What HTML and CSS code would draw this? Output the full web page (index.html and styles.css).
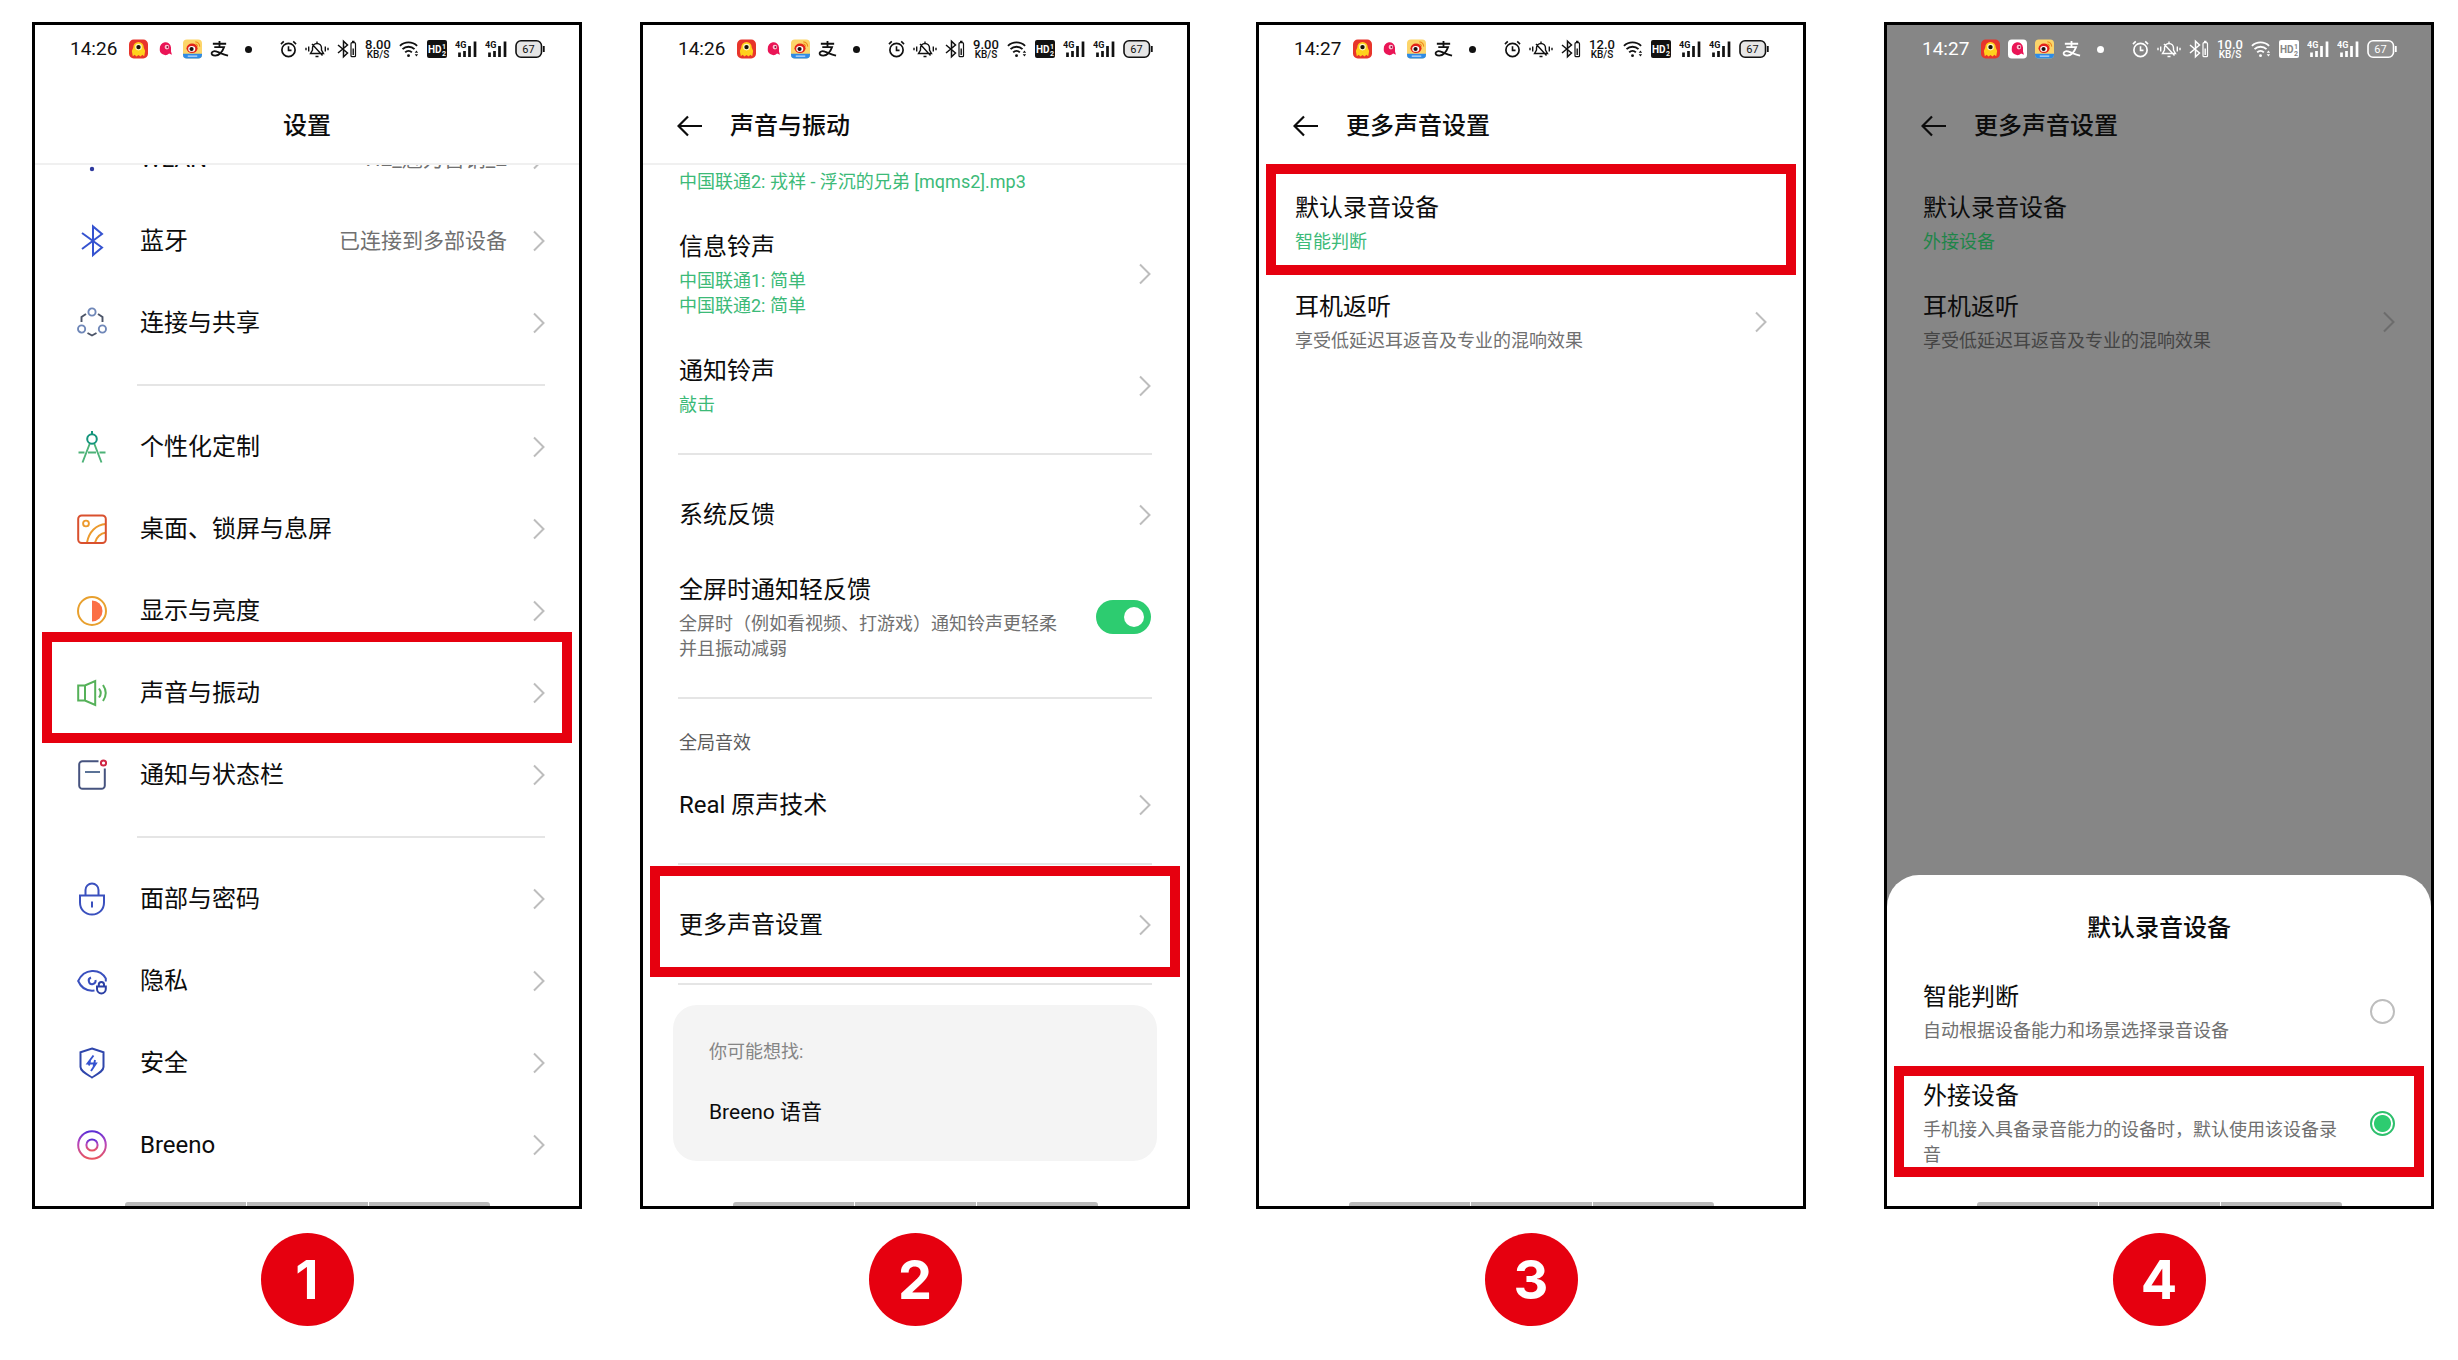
FILE: index.html
```
<!DOCTYPE html>
<html lang="zh-CN">
<head>
    <meta charset="UTF-8">
    <meta name="viewport" content="width=device-width, initial-scale=1.0">
    <title>默认录音设备设置步骤</title>
    <link rel="stylesheet" href="styles.css">
</head>
<body>
    <!-- Shared icons -->
    <svg class="sprite" aria-hidden="true">
        <symbol id="i-chevron" viewBox="0 0 12 22"><path d="M1 1.500L10.500 11L1 20.500" fill="none" stroke="currentColor" stroke-width="2"/></symbol>
        <symbol id="i-back" viewBox="0 0 26 22"><path d="M11 1.500L1.500 11L11 20.500M1.500 11H25" fill="none" stroke="currentColor" stroke-width="2.200"/></symbol>
        <symbol id="i-monster" viewBox="0 0 20 20">
            <rect x="0" y="0" width="20" height="20" rx="5" fill="#e8352b"/>
            <path d="M4.500 8.500a5.500 6 0 0 1 11 0L17 12l-1 5.500-2-1.500-1.800 2-2.200-1.800L7.800 18 6 16l-2 1.500L3 12z" fill="#ffd21c"/>
            <circle cx="10" cy="8" r="3.500" fill="#fff7c8"/><circle cx="10" cy="8" r="2.300" fill="#1a1208"/>
        </symbol>
        <symbol id="i-fish" viewBox="0 0 20 20">
            <rect class="plate" width="20" height="20" rx="4"/>
            <path d="M4 9.500a5.800 5.800 0 0 1 11.800-1.200v4.200l1 3.500-3-1.200A5.900 5.900 0 0 1 4 9.500z" fill="#ea1556"/>
            <circle cx="11.500" cy="8" r="2.400" fill="#ffc4d2"/><circle cx="12" cy="8" r="1.100" fill="#8b1640"/>
        </symbol>
        <symbol id="i-weibo" viewBox="0 0 20 20">
            <rect width="20" height="20" rx="4" fill="#fcd56a"/>
            <path d="M0 15h20v1a4 4 0 0 1-4 4H4a4 4 0 0 1-4-4z" fill="#2f8be6"/>
            <path d="M5 17.500h10" stroke="#cfe6ff" stroke-width="1.200"/>
            <ellipse cx="9.500" cy="9.300" rx="5.800" ry="5" fill="#e2231a"/>
            <ellipse cx="9.200" cy="9.900" rx="3.700" ry="3" fill="#fff"/>
            <circle cx="9" cy="10" r="2.200" fill="#1c1210"/>
            <path d="M13 2.500a4.500 4.500 0 0 1 4.500 5M13 4.800a2.300 2.300 0 0 1 2.200 2.500" fill="none" stroke="#f08a1c" stroke-width="1.200"/>
        </symbol>
        <symbol id="i-alipay" viewBox="0 0 20 20">
            <path d="M3 4.500h14M10 1.500V8M4.500 8h10.300c-1.500 4.200-5 8.800-9.300 9-3 0-4.200-1.500-3.700-3 .6-1.700 3-2.200 5.500-1.200 3.500 1.300 7 3 11.700 4.200" fill="none" stroke="currentColor" stroke-width="1.900"/>
        </symbol>
        <symbol id="i-alarm" viewBox="0 0 18 20">
            <circle cx="9" cy="11" r="7" fill="none" stroke="currentColor" stroke-width="1.800"/>
            <path d="M9 7v4.500h3.200M1 4.800L4 2M17 4.800L14 2" fill="none" stroke="currentColor" stroke-width="1.700"/>
        </symbol>
        <symbol id="i-mute" viewBox="0 0 24 20">
            <path d="M5.500 14.500h13L16.500 11V9a4.500 4.500 0 0 0-9 0v2zM12 4.500V2.500M10.500 17.500h3M7 5l10.500 11.500" fill="none" stroke="currentColor" stroke-width="1.400"/>
            <path d="M3.700 7.500v5M1 8.700v2.600M20.300 7.500v5M23 8.700v2.600" stroke="currentColor" stroke-width="1.400"/>
        </symbol>
        <symbol id="i-btbat" viewBox="0 0 20 20">
            <path d="M1 6l9.500 8-4 3.800V2.200l4 3.800L1 14" fill="none" stroke="currentColor" stroke-width="1.500"/>
            <rect x="14" y="3.700" width="4.500" height="14" rx="1" fill="none" stroke="currentColor" stroke-width="1.200"/>
            <path d="M15 2.400h2.500M16.200 9.500v6.500" stroke="currentColor" stroke-width="1.400"/>
        </symbol>
        <symbol id="i-wifi" viewBox="0 0 21 20">
            <path d="M1 6.700a13 13 0 0 1 18 0M3.700 10.200a9 9 0 0 1 12.600 0M6.500 13.500a5 5 0 0 1 7 0" fill="none" stroke="currentColor" stroke-width="2"/>
            <circle cx="10" cy="17" r="1.500" fill="currentColor"/>
            <path d="M16.500 14l1.800-2.300 1.800 2.300zM16.500 15.500l1.800 2.300 1.800-2.300z" fill="currentColor"/>
        </symbol>
        <symbol id="i-hd" viewBox="0 0 20 18">
            <rect width="20" height="18" rx="2" fill="currentColor"/>
            <text class="knock" x="1" y="13" font-size="10">HD</text>
            <text class="knock" x="15" y="8.500" font-size="7">1</text>
            <text class="knock" x="15" y="15.500" font-size="7">2</text>
        </symbol>
        <symbol id="i-signal" viewBox="0 0 22 20">
            <text x="0" y="8.500" font-size="9" font-weight="700" fill="currentColor">4G</text>
            <path d="M4.500 13.500V18M9.500 12V18M14.500 7V18M20 2.500V18" stroke="currentColor" stroke-width="2.700"/>
        </symbol>
        <symbol id="i-battery" viewBox="0 0 30 20">
            <rect class="cell" x="1" y="1.800" width="25.500" height="16.400" rx="5" stroke="currentColor" stroke-width="1.600"/>
            <path d="M28.800 7v6" stroke="currentColor" stroke-width="1.800"/>
            <text x="13.500" y="14" font-size="11" text-anchor="middle" fill="currentColor">67</text>
        </symbol>
    </svg>

    <main class="steps">
        <!-- Step 1 -->
        <section class="step">
            <div class="phone">
                <div class="status">
                    <div class="status-left">
                        <time>14:26</time>
                        <svg class="app"><use href="#i-monster"/></svg>
                        <svg class="app"><use href="#i-fish"/></svg>
                        <svg class="app"><use href="#i-weibo"/></svg>
                        <svg class="app"><use href="#i-alipay"/></svg>
                        <span class="dot"></span>
                    </div>
                    <div class="status-right">
                        <svg class="s-alarm"><use href="#i-alarm"/></svg>
                        <svg class="s-mute"><use href="#i-mute"/></svg>
                        <svg class="s-icon"><use href="#i-btbat"/></svg>
                        <span class="speed"><b>8.00</b><small>KB/S</small></span>
                        <svg class="s-icon"><use href="#i-wifi"/></svg>
                        <svg class="s-icon"><use href="#i-hd"/></svg>
                        <svg class="s-signal"><use href="#i-signal"/></svg>
                        <svg class="s-signal"><use href="#i-signal"/></svg>
                        <svg class="s-battery"><use href="#i-battery"/></svg>
                    </div>
                </div>
                <header class="bar bar-center bar-line"><h1>设置</h1></header>
                <div class="scroll">
                    <nav class="menu">
                        <a class="item" href="#">
                            <svg class="item-icon" viewBox="0 0 30 34"><path d="M1 9a20 20 0 0 1 28 0M6 15a13 13 0 0 1 18 0M11 20a6 6 0 0 1 8 0" fill="none" stroke="#2f3a9e" stroke-width="2"/><circle cx="15" cy="27" r="2.200" fill="#2f3a9e"/></svg>
                            <span class="name">WLAN</span><span class="value">H2_魅力营销_2</span>
                            <svg class="chevron"><use href="#i-chevron"/></svg>
                        </a>
                        <a class="item" href="#">
                            <svg class="item-icon" viewBox="0 0 30 34"><path d="M5 9l20 14.500-9 7.500V2.500l9 7.500L5 25" fill="none" stroke="#3553d0" stroke-width="2"/></svg>
                            <span class="name">蓝牙</span><span class="value">已连接到多部设备</span>
                            <svg class="chevron"><use href="#i-chevron"/></svg>
                        </a>
                        <a class="item" href="#">
                            <svg class="item-icon" viewBox="0 0 30 34"><g fill="none" stroke="#6f87b8" stroke-width="1.900"><circle cx="15" cy="6" r="3.600"/><circle cx="4.600" cy="23" r="3.600"/><circle cx="25.400" cy="23" r="3.600"/></g><path d="M9 8L4.500 11v5M21 8l4.500 3v5M10.500 27l4.500 2.500 4.500-2.500" fill="none" stroke="#4c5568" stroke-width="1.900"/></svg>
                            <span class="name">连接与共享</span>
                            <svg class="chevron"><use href="#i-chevron"/></svg>
                        </a>
                        <hr>
                        <a class="item" href="#">
                            <svg class="item-icon" viewBox="0 0 30 34"><path d="M13 13L5.500 32.500M17 13l7.500 19.500M1.500 22.500h6M11 22.500h8M22.500 22.500h6" fill="none" stroke="#4cb277" stroke-width="1.900"/><path d="M15 1v3" stroke="#14957c" stroke-width="2"/><circle cx="15" cy="9" r="4.800" fill="none" stroke="#14957c" stroke-width="2"/></svg>
                            <span class="name">个性化定制</span>
                            <svg class="chevron"><use href="#i-chevron"/></svg>
                        </a>
                        <a class="item" href="#">
                            <svg class="item-icon" viewBox="0 0 30 34"><g fill="none" stroke="#ec9a2d" stroke-width="1.900"><circle cx="9" cy="11.500" r="2.900"/><path d="M10 30.500C12 20 19 12.500 29 12M18 30.500c1.500-5 5-9 11-10"/></g><rect x="1.200" y="3.500" width="27.600" height="27.600" rx="3.500" fill="none" stroke="#d9502e" stroke-width="2"/></svg>
                            <span class="name">桌面、锁屏与息屏</span>
                            <svg class="chevron"><use href="#i-chevron"/></svg>
                        </a>
                        <a class="item" href="#">
                            <svg class="item-icon" viewBox="0 0 30 34"><circle cx="15" cy="17" r="14" fill="none" stroke="#e8a02e" stroke-width="2"/><path d="M15 6.500a10.500 10.500 0 0 1 0 21z" fill="#fb6f46"/></svg>
                            <span class="name">显示与亮度</span>
                            <svg class="chevron"><use href="#i-chevron"/></svg>
                        </a>
                        <a class="item marked marked-menu" href="#">
                            <svg class="item-icon" viewBox="0 0 30 34"><path d="M1.200 9.500H8L18.200 5v24L8 24.500H1.200zM8 9.500v15" fill="none" stroke="#55b159" stroke-width="2"/><path d="M22 12.500q3.500 4.500 0 9M26 9q5.500 8 0 16" fill="none" stroke="#55b159" stroke-width="2"/></svg>
                            <span class="name">声音与振动</span>
                            <svg class="chevron"><use href="#i-chevron"/></svg>
                        </a>
                        <a class="item" href="#">
                            <svg class="item-icon" viewBox="0 0 30 34"><path d="M21.500 3.200H5.500a3.300 3.300 0 0 0-3.300 3.300v21a3.300 3.300 0 0 0 3.300 3.300h19a3.300 3.300 0 0 0 3.300-3.300V10.500" fill="none" stroke="#46537f" stroke-width="2"/><path d="M8 14h15" stroke="#5b7397" stroke-width="2"/><circle cx="26.500" cy="5" r="2.600" fill="none" stroke="#cf2745" stroke-width="2"/></svg>
                            <span class="name">通知与状态栏</span>
                            <svg class="chevron"><use href="#i-chevron"/></svg>
                        </a>
                        <hr>
                        <a class="item" href="#">
                            <svg class="item-icon" viewBox="0 0 30 34"><path d="M3 13.500h24v7c0 7-5 12-12 12s-12-5-12-12zM8.500 13.500V8a6.500 6.500 0 0 1 13 0v5.500M15 19.500v6" fill="none" stroke="#3a50be" stroke-width="2"/></svg>
                            <span class="name">面部与密码</span>
                            <svg class="chevron"><use href="#i-chevron"/></svg>
                        </a>
                        <a class="item" href="#">
                            <svg class="item-icon" viewBox="0 0 30 34"><path d="M17.500 26.500C9 27.500 4 23.500 1.200 17 7 4 23 4 28.800 14.500v3" fill="none" stroke="#3a50be" stroke-width="2"/><path d="M14 13.500a3.400 3.400 0 1 0 4.500 2.500" fill="none" stroke="#3a50be" stroke-width="2"/><path d="M20 22.500h8.800v2.500a4.400 4.400 0 0 1-8.800 0zM21.800 22.500v-2a2.600 2.600 0 0 1 5.200 0v2" fill="none" stroke="#2b3fa5" stroke-width="2"/></svg>
                            <span class="name">隐私</span>
                            <svg class="chevron"><use href="#i-chevron"/></svg>
                        </a>
                        <a class="item" href="#">
                            <svg class="item-icon" viewBox="0 0 30 34"><path d="M15 2.500l11.500 3.800V21c0 4-6 7-11.500 10.500C9.500 28 3.500 25 3.500 21V6.300z" fill="none" stroke="#2f46ac" stroke-width="2"/><path d="M16.500 9.500l-6 8h8.500l-5 7.500M13 14.500l-1 5M18 14l-1.500 7" fill="none" stroke="#3553d0" stroke-width="1.900"/></svg>
                            <span class="name">安全</span>
                            <svg class="chevron"><use href="#i-chevron"/></svg>
                        </a>
                        <a class="item" href="#">
                            <svg class="item-icon" viewBox="0 0 30 34"><defs><linearGradient id="breeno" x1="0" y1="0" x2="0" y2="1"><stop offset="0" stop-color="#5a2fd6"/><stop offset=".4" stop-color="#b344c0"/><stop offset="1" stop-color="#e8555f"/></linearGradient></defs><circle cx="15" cy="17" r="13.800" fill="none" stroke="url(#breeno)" stroke-width="2"/><circle cx="15" cy="17" r="5.600" fill="none" stroke="url(#breeno)" stroke-width="2"/></svg>
                            <span class="name">Breeno</span>
                            <svg class="chevron"><use href="#i-chevron"/></svg>
                        </a>
                    </nav>
                </div>
                <div class="home"><i></i><i></i><i></i></div>
            </div>
            <div class="number">1</div>
        </section>

        <!-- Step 2 -->
        <section class="step">
            <div class="phone">
                <div class="status">
                    <div class="status-left">
                        <time>14:26</time>
                        <svg class="app"><use href="#i-monster"/></svg>
                        <svg class="app"><use href="#i-fish"/></svg>
                        <svg class="app"><use href="#i-weibo"/></svg>
                        <svg class="app"><use href="#i-alipay"/></svg>
                        <span class="dot"></span>
                    </div>
                    <div class="status-right">
                        <svg class="s-alarm"><use href="#i-alarm"/></svg>
                        <svg class="s-mute"><use href="#i-mute"/></svg>
                        <svg class="s-icon"><use href="#i-btbat"/></svg>
                        <span class="speed"><b>9.00</b><small>KB/S</small></span>
                        <svg class="s-icon"><use href="#i-wifi"/></svg>
                        <svg class="s-icon"><use href="#i-hd"/></svg>
                        <svg class="s-signal"><use href="#i-signal"/></svg>
                        <svg class="s-signal"><use href="#i-signal"/></svg>
                        <svg class="s-battery"><use href="#i-battery"/></svg>
                    </div>
                </div>
                <header class="bar bar-line">
                    <button class="back" type="button" aria-label="返回"><svg><use href="#i-back"/></svg></button>
                    <h1>声音与振动</h1>
                </header>
                <div class="scroll list">
                    <p class="row-tail green">中国联通2: 戎祥 - 浮沉的兄弟 [mqms2].mp3</p>
                    <a class="row" href="#">
                        <span class="text"><span class="name">信息铃声</span><span class="sub green">中国联通1: 简单<br>中国联通2: 简单</span></span>
                        <svg class="chevron"><use href="#i-chevron"/></svg>
                    </a>
                    <a class="row" href="#">
                        <span class="text"><span class="name">通知铃声</span><span class="sub green">敲击</span></span>
                        <svg class="chevron"><use href="#i-chevron"/></svg>
                    </a>
                    <hr>
                    <a class="row" href="#">
                        <span class="text"><span class="name">系统反馈</span></span>
                        <svg class="chevron"><use href="#i-chevron"/></svg>
                    </a>
                    <label class="row">
                        <span class="text"><span class="name">全屏时通知轻反馈</span><span class="sub">全屏时（例如看视频、打游戏）通知铃声更轻柔并且振动减弱</span></span>
                        <input class="switch" type="checkbox" checked>
                    </label>
                    <hr>
                    <h2 class="group">全局音效</h2>
                    <a class="row" href="#">
                        <span class="text"><span class="name">Real 原声技术</span></span>
                        <svg class="chevron"><use href="#i-chevron"/></svg>
                    </a>
                    <hr>
                    <a class="row marked marked-row" href="#">
                        <span class="text"><span class="name">更多声音设置</span></span>
                        <svg class="chevron"><use href="#i-chevron"/></svg>
                    </a>
                    <hr>
                    <div class="suggest">
                        <p>你可能想找:</p>
                        <a href="#">Breeno 语音</a>
                    </div>
                </div>
                <div class="home"><i></i><i></i><i></i></div>
            </div>
            <div class="number">2</div>
        </section>

        <!-- Step 3 -->
        <section class="step">
            <div class="phone">
                <div class="status">
                    <div class="status-left">
                        <time>14:27</time>
                        <svg class="app"><use href="#i-monster"/></svg>
                        <svg class="app"><use href="#i-fish"/></svg>
                        <svg class="app"><use href="#i-weibo"/></svg>
                        <svg class="app"><use href="#i-alipay"/></svg>
                        <span class="dot"></span>
                    </div>
                    <div class="status-right">
                        <svg class="s-alarm"><use href="#i-alarm"/></svg>
                        <svg class="s-mute"><use href="#i-mute"/></svg>
                        <svg class="s-icon"><use href="#i-btbat"/></svg>
                        <span class="speed"><b>12.0</b><small>KB/S</small></span>
                        <svg class="s-icon"><use href="#i-wifi"/></svg>
                        <svg class="s-icon"><use href="#i-hd"/></svg>
                        <svg class="s-signal"><use href="#i-signal"/></svg>
                        <svg class="s-signal"><use href="#i-signal"/></svg>
                        <svg class="s-battery"><use href="#i-battery"/></svg>
                    </div>
                </div>
                <header class="bar">
                    <button class="back" type="button" aria-label="返回"><svg><use href="#i-back"/></svg></button>
                    <h1>更多声音设置</h1>
                </header>
                <div class="list list-top">
                    <a class="row marked marked-first" href="#">
                        <span class="text"><span class="name">默认录音设备</span><span class="sub green">智能判断</span></span>
                    </a>
                    <a class="row" href="#">
                        <span class="text"><span class="name">耳机返听</span><span class="sub">享受低延迟耳返音及专业的混响效果</span></span>
                        <svg class="chevron"><use href="#i-chevron"/></svg>
                    </a>
                </div>
                <div class="home"><i></i><i></i><i></i></div>
            </div>
            <div class="number">3</div>
        </section>

        <!-- Step 4 -->
        <section class="step">
            <div class="phone dimmed">
                <div class="status">
                    <div class="status-left">
                        <time>14:27</time>
                        <svg class="app"><use href="#i-monster"/></svg>
                        <svg class="app"><use href="#i-fish"/></svg>
                        <svg class="app"><use href="#i-weibo"/></svg>
                        <svg class="app"><use href="#i-alipay"/></svg>
                        <span class="dot"></span>
                    </div>
                    <div class="status-right">
                        <svg class="s-alarm"><use href="#i-alarm"/></svg>
                        <svg class="s-mute"><use href="#i-mute"/></svg>
                        <svg class="s-icon"><use href="#i-btbat"/></svg>
                        <span class="speed"><b>10.0</b><small>KB/S</small></span>
                        <svg class="s-icon"><use href="#i-wifi"/></svg>
                        <svg class="s-icon"><use href="#i-hd"/></svg>
                        <svg class="s-signal"><use href="#i-signal"/></svg>
                        <svg class="s-signal"><use href="#i-signal"/></svg>
                        <svg class="s-battery"><use href="#i-battery"/></svg>
                    </div>
                </div>
                <header class="bar">
                    <button class="back" type="button" aria-label="返回"><svg><use href="#i-back"/></svg></button>
                    <h1>更多声音设置</h1>
                </header>
                <div class="list list-top">
                    <a class="row" href="#">
                        <span class="text"><span class="name">默认录音设备</span><span class="sub green">外接设备</span></span>
                    </a>
                    <a class="row" href="#">
                        <span class="text"><span class="name">耳机返听</span><span class="sub">享受低延迟耳返音及专业的混响效果</span></span>
                        <svg class="chevron"><use href="#i-chevron"/></svg>
                    </a>
                </div>
                <form class="sheet">
                    <h2>默认录音设备</h2>
                    <label class="row">
                        <span class="text"><span class="name">智能判断</span><span class="sub">自动根据设备能力和场景选择录音设备</span></span>
                        <input class="radio" type="radio" name="device">
                    </label>
                    <label class="row marked marked-option">
                        <span class="text"><span class="name">外接设备</span><span class="sub">手机接入具备录音能力的设备时，默认使用该设备录音</span></span>
                        <input class="radio" type="radio" name="device" checked>
                    </label>
                    <div class="home"><i></i><i></i><i></i></div>
                </form>
            </div>
            <div class="number">4</div>
        </section>
    </main>
</body>
</html>
```

FILE: styles.css
```
* {
    margin: 0;
    padding: 0;
    box-sizing: border-box;
}

body {
    background: #fff;
    color: #0c0c0c;
    font-family: Roboto, "Noto Sans CJK SC", sans-serif;
    font-size: 24px;
    line-height: 34px;
}

a {
    color: inherit;
    text-decoration: none;
}

.sprite {
    display: none;
}

/* Four phones side by side */
.steps {
    display: flex;
    padding: 22px 24px 20px 32px;
}

.step {
    flex: 1;
    min-width: 0;
    display: flex;
    flex-direction: column;
    align-items: center;
}

.step:nth-child(2) { margin-left: 58px; }
.step:nth-child(3) { margin-left: 66px; }
.step:nth-child(4) { margin-left: 78px; }

.phone {
    --screen: #fff;
    --green: #3cba78;
    --grey: #707070;
    --arrow: #bdbdbd;
    --status: #111;
    --cell: #e6e6e6;
    --plate: transparent;
    flex: 1;
    width: 100%;
    display: flex;
    flex-direction: column;
    background: var(--screen);
    border: 3px solid #000;
}

.dimmed {
    --screen: #868686;
    --green: #1f8549;
    --grey: #444;
    --arrow: #6c6c6c;
    --status: #fff;
    --cell: #909090;
    --plate: #fff;
}

.number {
    width: 93px;
    height: 93px;
    margin-top: 24px;
    border-radius: 50%;
    background: #e6000f;
    color: #fff;
    font: bold 54px/93px Inter, sans-serif;
    text-align: center;
}

/* Status bar */
.status {
    display: flex;
    justify-content: space-between;
    align-items: center;
    height: 48px;
    padding: 0 34px 0 35px;
    color: var(--status);
}

.status-left,
.status-right {
    display: flex;
    align-items: center;
    gap: 8px;
}

.status svg {
    height: 20px;
}

.status time {
    margin-right: 4px;
    font-size: 19px;
}

.status .app {
    width: 19px;
}

.plate { fill: var(--plate); }

.dot {
    width: 7px;
    height: 7px;
    margin-left: 8px;
    border-radius: 50%;
    background: currentColor;
}

.s-alarm { width: 17px; }
.s-mute { width: 24px; }
.s-icon { width: 20px; }
.s-signal { width: 22px; }
.s-battery { width: 30px; }

.knock {
    fill: var(--screen);
    font-weight: 700;
}

.cell {
    fill: var(--cell);
}

.speed {
    display: flex;
    flex-direction: column;
    align-items: center;
    width: 26px;
}

.speed b {
    font-size: 13px;
    font-weight: 500;
    line-height: 11px;
}

.speed small {
    font-size: 10px;
    font-weight: 500;
    line-height: 10px;
}

/* Title bar */
.bar {
    position: relative;
    z-index: 1;
    display: flex;
    align-items: center;
    gap: 27px;
    height: 92px;
    padding: 16px 34px 0;
    background: var(--screen);
    border-bottom: 2px solid transparent;
}

.bar-center {
    justify-content: center;
}

.bar-line {
    border-color: #f0f0f0;
}

h1,
.sheet h2 {
    font-size: 24px;
    font-weight: 500;
}

.back {
    width: 26px;
    height: 22px;
    border: 0;
    background: none;
    color: #0c0c0c;
    cursor: pointer;
}

.back svg {
    display: block;
    width: 26px;
    height: 22px;
}

.chevron {
    flex: none;
    width: 12px;
    height: 22px;
    color: var(--arrow);
}

hr {
    height: 2px;
    border: 0;
    background: #e5e5e5;
}

/* Main settings menu, scrolled a little under the title bar */
.menu {
    margin-top: -47px;
    padding-bottom: 16px;
}

.item {
    display: flex;
    align-items: center;
    height: 82px;
    padding: 0 34px 0 42px;
}

.item-icon {
    width: 30px;
    height: 34px;
    margin-right: 33px;
}

.item .name {
    flex: 1;
}

.value {
    margin-right: 26px;
    color: var(--grey);
    font-size: 21px;
}

.menu hr {
    margin: 20px 34px 20px 102px;
}

/* Lists of rows */
.list hr {
    margin: 19px 35px;
}

.list-top {
    padding-top: 7px;
}

.row-tail {
    padding: 4px 36px 17px;
    font-size: 18px;
    line-height: 25px;
}

.row {
    display: flex;
    align-items: center;
    justify-content: space-between;
    gap: 30px;
    min-height: 80px;
    padding: 19px 36px 17px;
}

.text {
    display: flex;
    flex-direction: column;
    gap: 4px;
}

.sub {
    color: var(--grey);
    font-size: 18px;
    line-height: 25px;
}

.green {
    color: var(--green);
}

.group {
    padding: 12px 36px 9px;
    color: #5c5c5c;
    font-size: 18px;
    font-weight: 400;
    line-height: 25px;
}

.switch {
    appearance: none;
    flex: none;
    display: flex;
    align-items: center;
    justify-content: flex-end;
    width: 55px;
    height: 34px;
    padding: 0 7px;
    border-radius: 17px;
    background: #2dcc70;
}

.switch::before {
    content: '';
    width: 20px;
    height: 20px;
    border-radius: 50%;
    background: #fff;
}

.suggest {
    display: flex;
    flex-direction: column;
    gap: 31px;
    margin: 20px 30px 0;
    padding: 34px 36px 32px;
    border-radius: 24px;
    background: #f4f4f4;
    font-size: 21px;
}

.suggest p {
    color: #858585;
    font-size: 18px;
    line-height: 25px;
}

/* Red frame round the entry to tap */
.marked {
    position: relative;
}

.marked::after {
    content: '';
    position: absolute;
    left: 7px;
    right: 7px;
    z-index: 2;
    border: 10px solid #e6000f;
    pointer-events: none;
}

.marked-menu::after { top: -20px; bottom: -9px; }
.marked-row::after { top: -18px; bottom: -13px; }
.marked-first::after { top: -8px; bottom: -4px; }
.marked-option::after { top: 6px; bottom: 7px; }

/* Bottom sheet */
.sheet {
    margin-top: auto;
    padding-top: 36px;
    border-radius: 32px 32px 0 0;
    background: #fff;
    --grey: #707070;
}

.sheet h2 {
    margin-bottom: 16px;
    text-align: center;
}

.sheet .home {
    margin-top: 18px;
}

.radio {
    appearance: none;
    flex: none;
    width: 25px;
    height: 25px;
    border: 2px solid #bdbdbd;
    border-radius: 50%;
}

.radio:checked {
    border-color: #2dbf6c;
    background: radial-gradient(circle, #2dcc70 0 8px, #fff 9px);
}

/* Home indicator */
.home {
    display: flex;
    justify-content: center;
    gap: 1px;
    margin-top: auto;
}

.home i {
    width: 121px;
    height: 4px;
    background: #bababa;
}

.home i:first-child { border-top-left-radius: 3px; }
.home i:last-child { border-top-right-radius: 3px; }
```
